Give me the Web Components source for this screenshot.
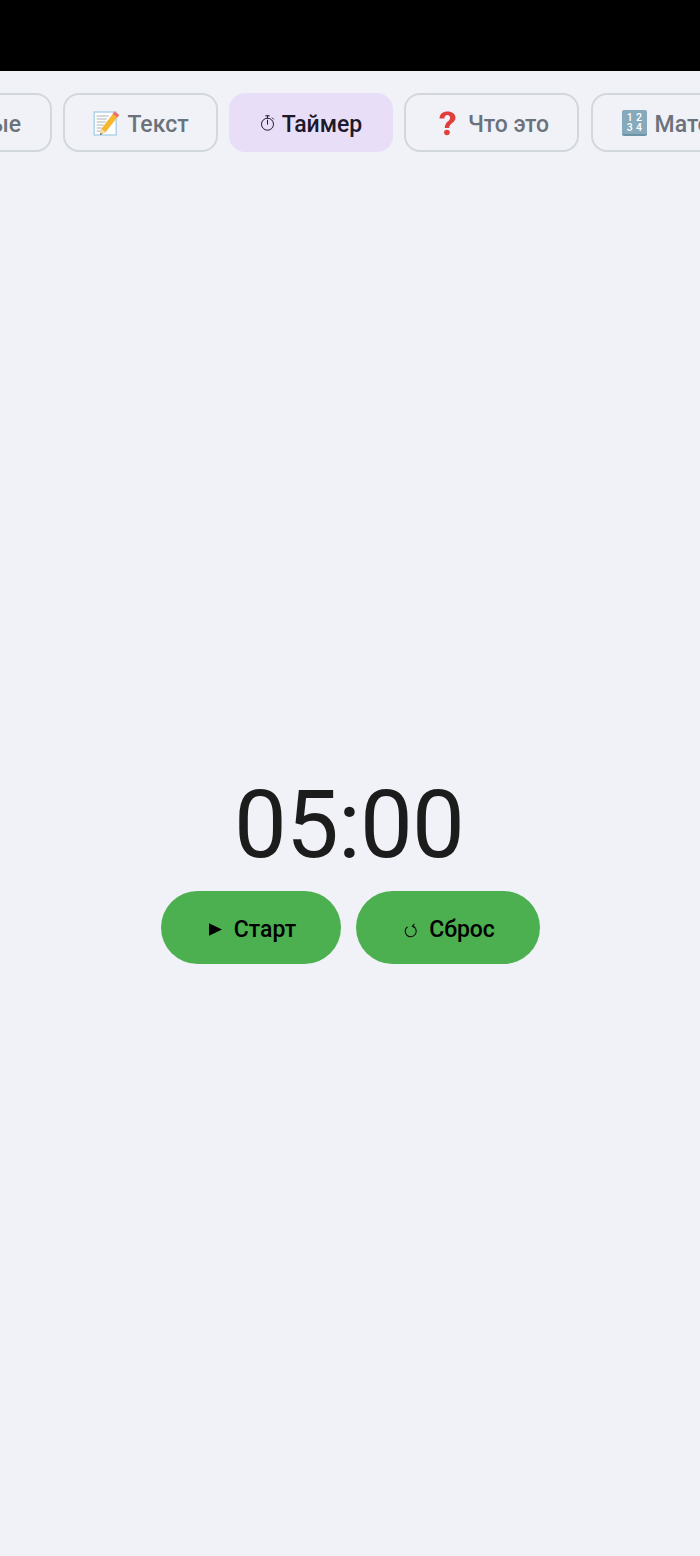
<!DOCTYPE html>
<html lang="ru">
<head>
<meta charset="utf-8">
<title>Таймер</title>
<style>
  html, body { margin: 0; height: 100%; }
  body { font-family: Roboto, "Liberation Sans", sans-serif; background: #f0f2f7; }
</style>
</head>
<body>
<tool-app>
  <tab-bar>
    <tab-chip class="cut">ые</tab-chip>
    <tab-chip style="width:155px">
      <svg slot="icon" width="28" height="28" viewBox="-0.7 0 28 28">
        <rect x="1.5" y="3" width="22" height="23" fill="#fdfdfd" stroke="#a9d2e8" stroke-width="1.4"/>
        <path d="M4 7h12M4 10h10M4 13h9M4 16h7M4 19h5M4 22h6" stroke="#a5abb0" stroke-width=".9"/>
        <path d="M22 2.5l4.5 3.5L13 23l-5.5 3 1-6z" fill="#f6b62e"/>
        <path d="M22 2.5l4.5 3.5-2 2.6-4.6-3.6z" fill="#e7707b"/>
        <path d="M8.5 20l-1 6 5.5-3z" fill="#f3dcb5"/>
        <path d="M7.9 24l-.4 2 1.9-1z" fill="#333"/>
      </svg>
      Текст
    </tab-chip>
    <tab-chip active style="width:164px">
      <svg slot="icon" width="15" height="16" viewBox="0 0 15 16" fill="none" stroke="#1d192b" stroke-width="1">
        <circle cx="7.5" cy="9.200" r="6"/>
        <path d="M5.700 .8h3.600M7.500 .8v2.400M7.500 9.200V5.200M12.300 2.900l1.200 1.200" stroke-linecap="round"/>
      </svg>
      Таймер
    </tab-chip>
    <tab-chip class="ask" style="width:175px">
      <svg slot="icon" width="22" height="28" viewBox="0 0 22 28">
        <g transform="translate(.1 0) scale(1.14 1)" fill="#e0403c">
          <path d="M3 9.500C3 5 6 2.500 10 2.500s7 2.400 7 6.200c0 5-5.600 5.600-5.600 10.300H7.600C7.600 12.500 12.300 12.500 12.300 8.800c0-1.700-1-2.800-2.400-2.800-1.700 0-2.600 1.300-2.600 3.500z"/>
          <ellipse cx="9.500" cy="23.500" rx="2.500" ry="2.800"/>
        </g>
      </svg>
      Что это
    </tab-chip>
    <tab-chip class="math" style="width:200px">
      <key-cap slot="icon"></key-cap>
      Математика
    </tab-chip>
  </tab-bar>
  <timer-panel>
    <span slot="time">05:00</span>
    <pill-button style="width:180px">
      <svg slot="icon" width="13" height="13" viewBox="0 0 13 13"><path d="M0 .3L13 6.500 0 12.700z" fill="#000"/></svg>
      Старт
    </pill-button>
    <pill-button class="reset" style="width:184px">
      <svg slot="icon" width="14" height="15" viewBox="0 0 14 15" fill="none" stroke="#111" stroke-width="1.150"><path d="M3.500 3.800a5.500 5.500 0 1 0 5.400-.6"/><path d="M10.400 .9L8.400 3.200l2.800 1.300"/></svg>
      Сброс
    </pill-button>
  </timer-panel>
</tool-app>

<script>
class ToolApp extends HTMLElement {
  constructor() {
    super();
    this.attachShadow({ mode: "open" }).innerHTML = `
      <style>
        :host { display: flex; flex-direction: column; height: 1556px; overflow: hidden; }
        .status { height: 71px; background: #000; flex: none; }
      </style>
      <div class="status"></div>
      <slot></slot>`;
  }
}

class TabBar extends HTMLElement {
  constructor() {
    super();
    this.attachShadow({ mode: "open" }).innerHTML = `
      <style>
        :host { display: block; overflow: hidden; padding: 22px 0 0; flex: none; }
        .row { display: flex; gap: 11px; margin-left: -30px; width: max-content; }
      </style>
      <div class="row"><slot></slot></div>`;
  }
}

class TabChip extends HTMLElement {
  constructor() {
    super();
    this.attachShadow({ mode: "open" }).innerHTML = `
      <style>
        :host {
          display: flex; align-items: center; justify-content: center; gap: 7px;
          box-sizing: border-box; height: 59px; flex: none; padding-top: 3px;
          border: 2px solid #d2d7de; border-radius: 16px;
          font-size: 23px; font-weight: 500; color: #6b727b; white-space: nowrap;
        }
        :host([active]) { background: #e8def8; border-color: #e8def8; color: #1d192b; }
        :host(.cut) { width: 82px; justify-content: flex-end; padding-right: 29px; }
        :host(.ask) { gap: 10px; padding-left: 2px; }
        :host(.math) { justify-content: flex-start; padding-left: 29px; margin-left: 1px; gap: 8px; }
        ::slotted(svg) { flex: none; margin-top: -2px; }
        ::slotted(key-cap) { margin-top: -2px; }
      </style>
      <slot name="icon"></slot><slot></slot>`;
  }
}

class KeyCap extends HTMLElement {
  constructor() {
    super();
    this.attachShadow({ mode: "open" }).innerHTML = `
      <style>
        :host {
          display: grid; grid-template-columns: 1fr 1fr; place-items: center;
          box-sizing: border-box; width: 26px; height: 26px; padding: 3px 3px 2px;
          background: #86a9bb; border-radius: 2px; border-bottom: 2px solid #6c93a6;
          font: 500 10.500px/10px Roboto, sans-serif; color: #fff;
        }
      </style>
      <span>1</span><span>2</span><span>3</span><span>4</span>`;
  }
}

class TimerPanel extends HTMLElement {
  constructor() {
    super();
    this.attachShadow({ mode: "open" }).innerHTML = `
      <style>
        :host { display: flex; flex-direction: column; align-items: center; padding-top: 617px; }
        .time { font-size: 94px; line-height: 112px; letter-spacing: -.8px; color: #1c1c1c; margin-left: -2px; }
        .actions { display: flex; gap: 15px; margin-top: 10px; margin-left: 1px; }
      </style>
      <div class="time"><slot name="time"></slot></div>
      <div class="actions"><slot></slot></div>`;
  }
}

class PillButton extends HTMLElement {
  constructor() {
    super();
    this.attachShadow({ mode: "open" }).innerHTML = `
      <style>
        :host {
          display: flex; align-items: center; justify-content: center; gap: 12px;
          box-sizing: border-box; height: 73px; border-radius: 37px; padding: 3px 0 0 3px;
          background: #4caf50; color: #000; font-size: 23px; font-weight: 500;
        }
        :host(.reset) { gap: 11px; }
        ::slotted(svg) { margin-top: 1px; }
        :host(.reset) ::slotted(svg) { margin-top: 3px; }
      </style>
      <slot name="icon"></slot><span><slot></slot></span>`;
  }
}

customElements.define("tool-app", ToolApp);
customElements.define("tab-bar", TabBar);
customElements.define("tab-chip", TabChip);
customElements.define("key-cap", KeyCap);
customElements.define("timer-panel", TimerPanel);
customElements.define("pill-button", PillButton);
</script>
</body>
</html>
